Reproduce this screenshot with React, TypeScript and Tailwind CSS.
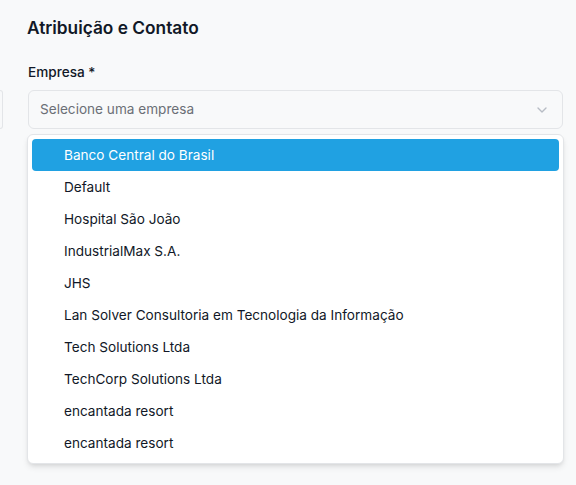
import React from 'react'
import { ChevronDown } from 'lucide-react'

const empresas = [
	'Banco Central do Brasil',
	'Default',
	'Hospital São João',
	'IndustrialMax S.A.',
	'JHS',
	'Lan Solver Consultoria em Tecnologia da Informação',
	'Tech Solutions Ltda',
	'TechCorp Solutions Ltda',
	'encantada resort',
	'encantada resort',
]

export default function App() {
	return (
		<div
			className="flex h-[485px] w-[576px] overflow-hidden bg-[#f8f9fa] text-[#111827]"
			style={{ fontFamily: 'Inter, "Noto Sans", sans-serif' }}
		>
			<div className="mt-[90px] h-[39px] w-[3px] shrink-0 rounded-r-md border border-l-0 border-[#e3e5e8] bg-[#f8f9fa]" />
			<div className="ml-[24px] flex w-[536px] flex-col">
				<h2 className="mt-[16px] text-[17.3px] leading-[24px] font-semibold">Atribuição e Contato</h2>
				<label className="mt-[22px] ml-[1px] text-[13.6px] leading-[20px] font-medium">Empresa *</label>
				<button className="mt-[8px] ml-[1px] flex h-[39px] w-[535px] items-center justify-between rounded-md border border-[#e3e5e8] bg-[#f8f9fa] pr-[12px] pl-[11px] text-left text-[13.6px] text-[#6b6f76]">
					<span>Selecione uma empresa</span>
					<ChevronDown className="h-4 w-4 text-[#9ca3af] opacity-70" strokeWidth={2} />
				</button>
				<div className="mt-[5px] w-[537px] rounded-md border border-[#e3e5e8] bg-white p-[4px] shadow-md">
					{empresas.map((e, i) => (
						<div
							key={i}
							className={
								i === 0
									? 'flex h-8 items-center rounded-[4px] bg-[#20a1e2] pl-8 text-[13.6px] text-white'
									: 'flex h-8 items-center rounded-[4px] pl-8 text-[13.6px] text-[#111827]'
							}
						>
							{e}
						</div>
					))}
				</div>
			</div>
		</div>
	)
}
